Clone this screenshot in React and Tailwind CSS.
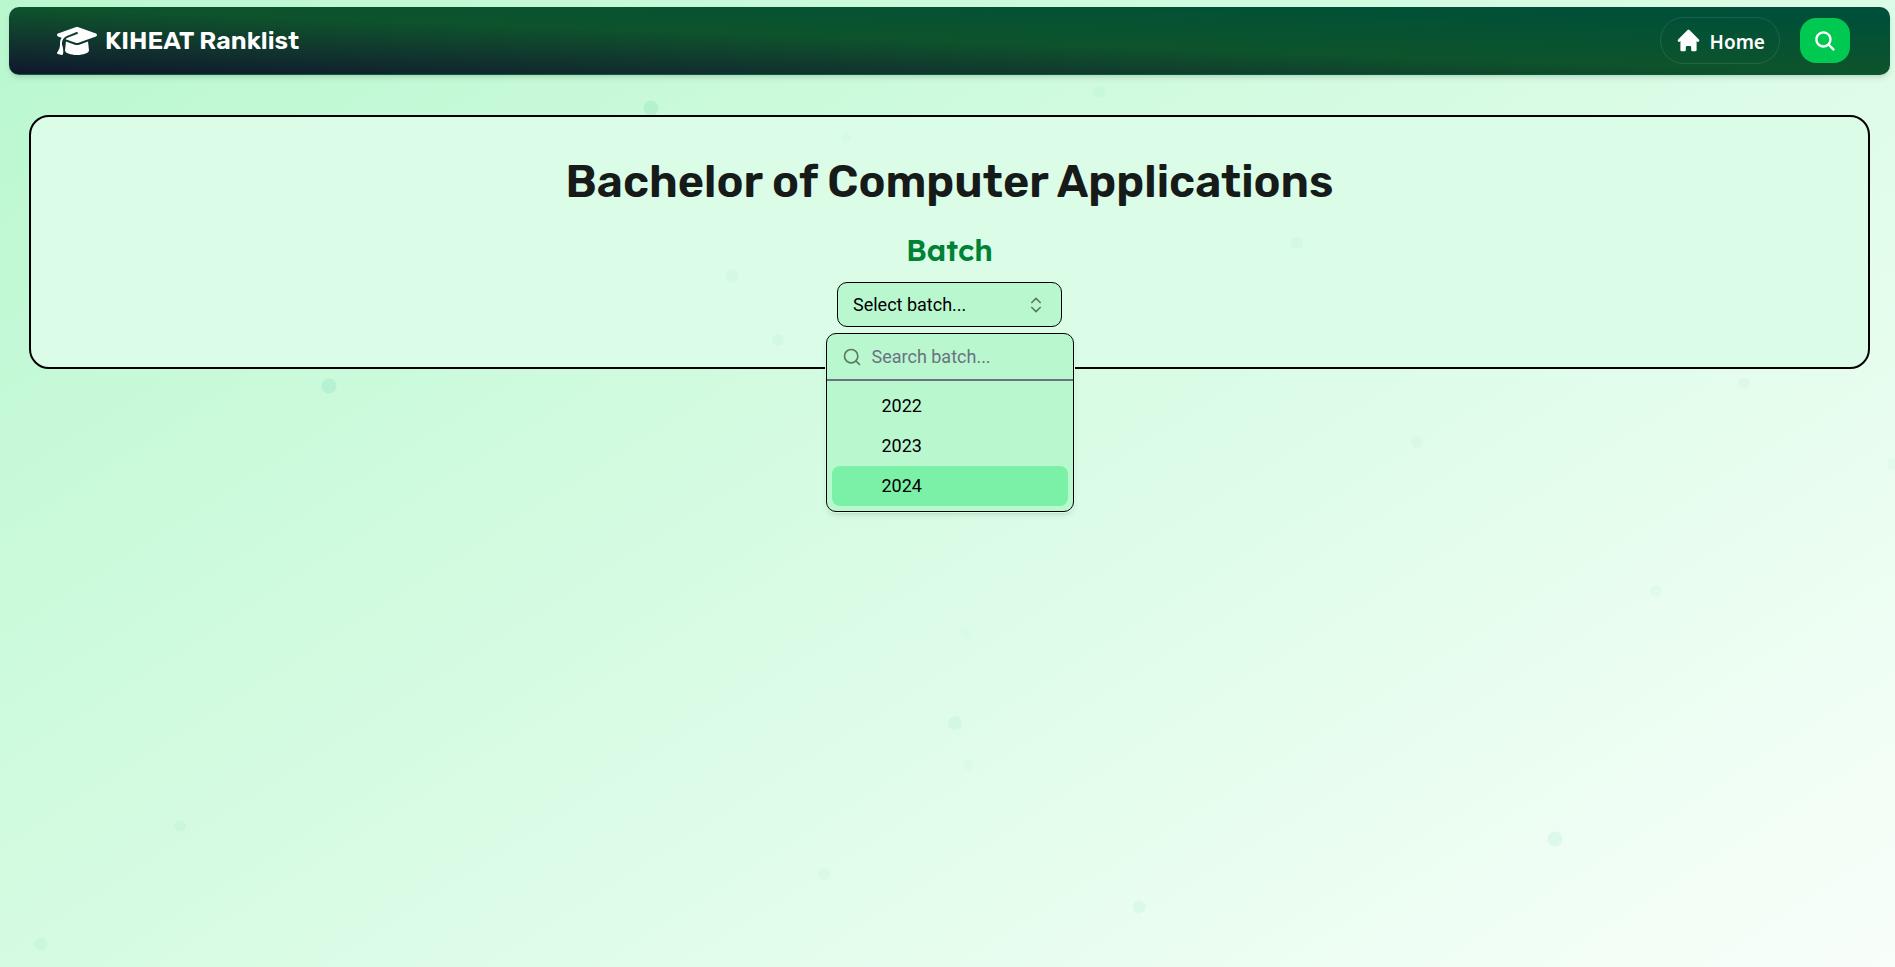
import React, { useState } from "react";
import { FaGraduationCap } from "react-icons/fa6";
import { HiHome } from "react-icons/hi";
import { IoSearch } from "react-icons/io5";
import { ChevronsUpDown, Search } from "lucide-react";

const particles = [
  { x: 34.35, y: 11.2, size: 15, color: "rgba(16,185,129,0.11)" },
  { x: 58, y: 9.5, size: 12, color: "rgba(16,185,129,0.04)" },
  { x: 44.65, y: 14.3, size: 11, color: "rgba(16,185,129,0.02)" },
  { x: 68.45, y: 25.1, size: 12, color: "rgba(16,185,129,0.04)" },
  { x: 38.65, y: 28.5, size: 13, color: "rgba(16,185,129,0.04)" },
  { x: 41.05, y: 35.2, size: 12, color: "rgba(16,185,129,0.04)" },
  { x: 17.35, y: 39.9, size: 15, color: "rgba(16,185,129,0.11)" },
  { x: 92.05, y: 39.6, size: 11, color: "rgba(16,185,129,0.04)" },
  { x: 74.75, y: 45.7, size: 12, color: "rgba(16,185,129,0.04)" },
  { x: 99.9, y: 48, size: 12, color: "rgba(16,185,129,0.04)" },
  { x: 87.4, y: 61.1, size: 12, color: "rgba(16,185,129,0.04)" },
  { x: 51, y: 65.5, size: 10, color: "rgba(16,185,129,0.02)" },
  { x: 50.4, y: 74.75, size: 14, color: "rgba(16,185,129,0.06)" },
  { x: 51.1, y: 79.1, size: 10, color: "rgba(16,185,129,0.03)" },
  { x: 9.5, y: 85.4, size: 12, color: "rgba(16,185,129,0.05)" },
  { x: 82.05, y: 86.8, size: 15, color: "rgba(16,185,129,0.08)" },
  { x: 43.5, y: 90.4, size: 12, color: "rgba(16,185,129,0.04)" },
  { x: 60.1, y: 93.75, size: 13, color: "rgba(16,185,129,0.06)" },
  { x: 2.15, y: 97.6, size: 13, color: "rgba(16,185,129,0.05)" },
];

function Particles() {
  return (
    <div className="pointer-events-none absolute inset-0 z-10 overflow-hidden" aria-hidden="true">
      {particles.map((p) => (
        <span
          key={`${p.x}-${p.y}`}
          className="absolute -translate-x-1/2 -translate-y-1/2 rounded-full"
          style={{ left: `${p.x}%`, top: `${p.y}%`, width: p.size, height: p.size, background: p.color }}
        />
      ))}
    </div>
  );
}

function Navbar() {
  return (
    <nav className="flex items-center justify-between rounded-[10px] border-b border-green-700/30 bg-linear-to-tr from-slate-900 via-green-900 to-emerald-900 py-2.5 pr-10 pl-12 shadow-md">
      <a href="#" className="flex items-center gap-2 text-white">
        <FaGraduationCap className="size-10" />
        <span className="font-['Rubik','Roboto',sans-serif] text-[25px] leading-8 font-semibold">KIHEAT Ranklist</span>
      </a>
      <div className="flex items-center gap-5">
        <a
          href="#"
          className="flex items-center gap-2 rounded-full border border-white/10 px-3.5 py-2 font-['Noto_Sans',sans-serif] text-[19px] leading-[25px] font-semibold text-white"
        >
          <HiHome className="size-[27px]" />
          <span className="pt-1">Home</span>
        </a>
        <button
          type="button"
          aria-label="Search"
          className="flex h-[45px] items-center rounded-2xl bg-[#00c951] px-[13px] text-white"
        >
          <IoSearch className="size-6" />
        </button>
      </div>
    </nav>
  );
}

function BatchPicker() {
  const years = ["2022", "2023", "2024"];
  const [active, setActive] = useState("2024");
  return (
    <div className="relative flex flex-col items-center font-['Roboto',sans-serif] text-lg">
      <button
        type="button"
        aria-expanded="true"
        aria-haspopup="listbox"
        className="flex h-[45px] w-[225px] items-center justify-between rounded-[10px] border border-black bg-green-200 px-[15px] text-black"
      >
        Select batch...
        <ChevronsUpDown className="size-5 opacity-50" />
      </button>
      <div className="absolute top-full z-20 mt-1.5 w-[248px] overflow-hidden rounded-[10px] border border-black bg-green-200 shadow-md ring-1 ring-green-100">
        <div className="flex h-[47px] items-center gap-2.5 border-b-2 border-gray-500 px-[15px]">
          <Search className="size-5 shrink-0 opacity-50" />
          <input
            type="text"
            aria-label="Search batch"
            placeholder="Search batch..."
            className="w-full bg-transparent outline-none placeholder:text-gray-500"
          />
        </div>
        <ul role="listbox" aria-label="Batch" className="p-[5px]">
          {years.map((y) => (
            <li
              key={y}
              role="option"
              aria-selected={active === y}
              onMouseEnter={() => setActive(y)}
              className={`flex h-10 items-center rounded-lg pl-[50px] text-black ${active === y ? "bg-[#7bf1a8]" : ""}`}
            >
              {y}
            </li>
          ))}
        </ul>
      </div>
    </div>
  );
}

export default function App() {
  return (
    <div className="relative min-h-screen bg-linear-to-br from-green-200 via-green-100 to-white bg-size-[100%_125%] bg-no-repeat pt-[7px] pr-[5px] pl-[9px]">
      <Particles />
      <header>
        <Navbar />
      </header>
      <main className="px-5 pt-10">
        <section className="flex flex-col items-center rounded-[20px] border-2 border-black bg-green-100 pt-[35px] pb-10">
          <h1 className="font-['Rubik','Roboto',sans-serif] text-[45px] leading-[60px] font-semibold text-[#161a19]">
            Bachelor of Computer Applications
          </h1>
          <h2 className="mt-5 mb-3.5 font-['Lexend','Lato',sans-serif] text-3xl font-semibold text-[#008236]">Batch</h2>
          <BatchPicker />
        </section>
      </main>
    </div>
  );
}
